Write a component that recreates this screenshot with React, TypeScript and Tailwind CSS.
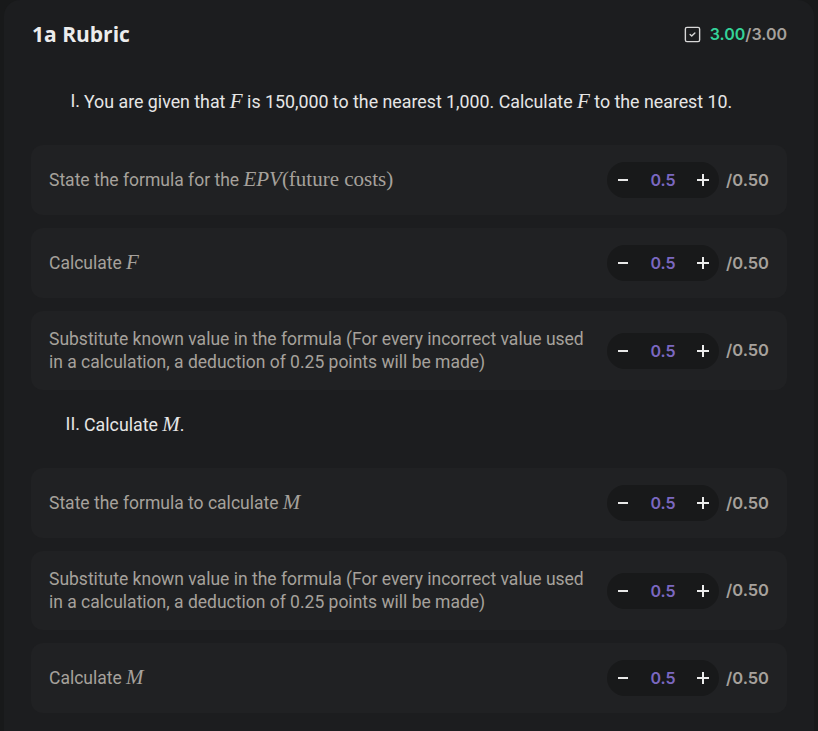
import React from "react";
import { SquareCheck } from "lucide-react";

const serif = { fontFamily: '"Liberation Serif", "DejaVu Serif", serif' };

function M({ children }: { children: React.ReactNode }) {
  return (
    <span className="text-[21px] italic" style={serif}>
      {children}
    </span>
  );
}

interface CriterionProps {
  label: React.ReactNode;
  value: string;
  max: string;
}

function Criterion({ label, value, max }: CriterionProps) {
  return (
    <div className="flex items-center justify-between gap-4 rounded-xl bg-[#202123] px-[18px] py-[17px]">
      <p className="text-[17.5px] leading-[22.5px] text-[#a6a19c]">{label}</p>
      <div className="flex shrink-0 items-center gap-[7px]">
        <div className="flex h-9 items-center rounded-full bg-[#18191a]">
          <button className="flex h-9 w-8 items-center justify-center">
            <span className="block h-[2px] w-[10px] bg-[#e8e8e8]" />
          </button>
          <span
            className="w-12 text-center text-[16px] font-semibold text-[#7b68c0]"
            style={{ fontFamily: 'Inter, "Liberation Sans", sans-serif' }}
          >
            {value}
          </span>
          <button className="relative flex h-9 w-8 items-center justify-center">
            <span className="block h-[2px] w-[12px] bg-[#ececec]" />
            <span className="absolute block h-[12px] w-[2px] bg-[#ececec]" />
          </button>
        </div>
        <span
          className="text-[16.5px] font-semibold text-[#a6a19c]"
          style={{ fontFamily: 'Inter, "Liberation Sans", sans-serif' }}
        >
          /{max}
        </span>
      </div>
    </div>
  );
}

function Question({ numeral, children }: { numeral: string; children: React.ReactNode }) {
  return (
    <p className="mb-[31px] flex text-[17.8px] leading-6 text-[#e6e6e6]">
      <span className="w-[53px] shrink-0 pr-[4px] text-right">{numeral}.</span>
      <span>{children}</span>
    </p>
  );
}

export default function App() {
  return (
    <div
      className="min-h-screen bg-[#18191a] px-1"
      style={{ fontFamily: 'Roboto, "Liberation Sans", sans-serif' }}
    >
      <div className="rounded-t-2xl bg-[#1c1d1f] px-[27px] pb-6 pt-5">
        <div className="mb-[19px] flex items-center justify-between">
          <h1
            className="pl-px text-[21px] font-bold leading-7 text-[#ececec]"
            style={{ fontFamily: '"Open Sans", "Liberation Sans", sans-serif' }}
          >
            1a Rubric
          </h1>
          <div
            className="flex items-center gap-2 text-[16px] font-semibold"
            style={{ fontFamily: 'Inter, "Liberation Sans", sans-serif' }}
          >
            <SquareCheck size={19} strokeWidth={1.75} className="text-[#d8d8d8]" />
            <span>
              <span className="text-[#34d399]">3.00</span>
              <span className="text-[#a6a19c]">/3.00</span>
            </span>
          </div>
        </div>

        <div className="pt-[22px]">
          <Question numeral="I">
            You are given that <M>F</M> is 150,000 to the nearest 1,000. Calculate <M>F</M> to the
            nearest 10.
          </Question>
          <div className="flex flex-col gap-[13px]">
            <Criterion
              label={
                <>
                  State the formula for the <M>EPV</M>
                  <span className="text-[21px]" style={serif}>
                    (future costs)
                  </span>
                </>
              }
              value="0.5"
              max="0.50"
            />
            <Criterion label={<>Calculate <M>F</M></>} value="0.5" max="0.50" />
            <Criterion
              label="Substitute known value in the formula (For every incorrect value used in a calculation, a deduction of 0.25 points will be made)"
              value="0.5"
              max="0.50"
            />
          </div>
        </div>

        <div className="pt-[22px]">
          <Question numeral="II">
            Calculate <M>M</M>.
          </Question>
          <div className="flex flex-col gap-[13px]">
            <Criterion label={<>State the formula to calculate <M>M</M></>} value="0.5" max="0.50" />
            <Criterion
              label="Substitute known value in the formula (For every incorrect value used in a calculation, a deduction of 0.25 points will be made)"
              value="0.5"
              max="0.50"
            />
            <Criterion label={<>Calculate <M>M</M></>} value="0.5" max="0.50" />
          </div>
        </div>
      </div>
    </div>
  );
}
